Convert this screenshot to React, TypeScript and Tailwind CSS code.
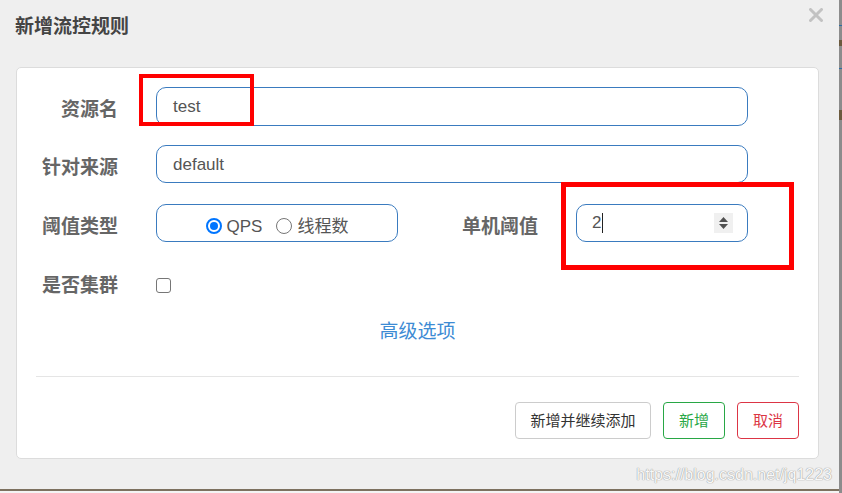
import React from "react";

const sans = "font-['Liberation_Sans','Noto_Sans_CJK_SC',sans-serif]";

function Label({ children, wide }: { children: React.ReactNode; wide?: boolean }) {
  return (
    <div
      className={`${wide ? "w-[102px]" : "w-[82px]"} shrink-0 pt-[7px] text-right text-[19px] font-bold leading-none text-[#666]`}
    >
      {children}
    </div>
  );
}

function Radio({ checked, label }: { checked?: boolean; label: string }) {
  return (
    <div className="flex items-center gap-[5px]">
      {checked ? (
        <span className="flex h-[16px] w-[16px] items-center justify-center rounded-full border-2 border-[#0075ff] bg-white">
          <span className="h-[8px] w-[8px] rounded-full bg-[#0075ff]" />
        </span>
      ) : (
        <span className="h-[16px] w-[16px] rounded-full border border-[#767676] bg-white" />
      )}
      <span className="text-[17px] leading-none text-[#555]">{label}</span>
    </div>
  );
}

export default function App() {
  return (
    <div className={`relative flex h-[493px] w-[842px] overflow-hidden bg-[#efefef] ${sans}`}>
      <div className="flex w-[839px] flex-col">
        <div className="flex h-[67px] items-start justify-between pl-[15px] pr-[16px]">
          <div className="mt-[15px] text-[19px] font-bold leading-[24px] text-[#444]">新增流控规则</div>
          <svg className="mt-[8px]" width="14" height="14" viewBox="0 0 14 14">
            <path d="M1.5 1.5 L12.5 12.5 M12.5 1.5 L1.5 12.5" stroke="#c2c2c2" strokeWidth="3" strokeLinecap="round" />
          </svg>
        </div>

        <div className="ml-[16px] w-[803px] rounded-[5px] border border-[#dcdcdc] bg-white px-[19px] pb-[19px] pt-[19px]">
          <div className="flex flex-col gap-[20px]">
            <div className="flex h-[38px] items-center gap-[38px]">
              <Label>资源名</Label>
              <div className="flex h-[39px] w-[592px] items-center rounded-[10px] border border-[#3a7bbf] px-[16px] pt-[1px] text-[17px] text-[#555]">
                test
              </div>
            </div>
            <div className="flex h-[38px] items-center gap-[38px]">
              <Label>针对来源</Label>
              <div className="flex h-[38px] w-[592px] items-center rounded-[10px] border border-[#3a7bbf] px-[16px] pt-[1px] text-[17px] text-[#555]">
                default
              </div>
            </div>
            <div className="mt-[1px] flex h-[38px] items-center gap-[38px]">
              <Label>阈值类型</Label>
              <div className="flex h-[38px] w-[242px] items-center justify-center gap-[14px] rounded-[10px] border border-[#3a7bbf] pt-[6px]">
                <Radio checked label="QPS" />
                <Radio label="线程数" />
              </div>
              <Label wide>单机阈值</Label>
              <div className="flex h-[38px] w-[172px] items-center rounded-[10px] border border-[#3a7bbf] pl-[15px] pr-[14px] text-[17px] text-[#555]">
                <span>2</span>
                <span className="ml-[1px] h-[20px] w-px bg-[#222]" />
                <div className="ml-auto flex h-[20px] w-[19px] flex-col items-center justify-center gap-[2px] bg-[#f0f0f0]">
                  <svg width="9" height="5" viewBox="0 0 9 5">
                    <path d="M0 5 L4.5 0 L9 5 Z" fill="#505050" />
                  </svg>
                  <svg width="9" height="5" viewBox="0 0 9 5">
                    <path d="M0 0 L4.5 5 L9 0 Z" fill="#505050" />
                  </svg>
                </div>
              </div>
            </div>
            <div className="mt-[1px] flex h-[38px] items-center gap-[38px]">
              <Label>是否集群</Label>
              <span className="mt-[6px] h-[15px] w-[15px] rounded-[3px] border border-[#767676] bg-white" />
            </div>
          </div>

          <div className="mt-[19px] text-center text-[19px] leading-[24px] text-[#3d8bd4]">高级选项</div>

          <div className="mt-[32px] border-t border-[#e5e5e5]" />

          <div className="mt-[25px] flex justify-end gap-[12px] text-[15px] leading-none">
            <div className="flex h-[37px] w-[136px] items-center justify-center rounded-[4px] border border-[#cccccc] text-[#333]">
              新增并继续添加
            </div>
            <div className="flex h-[37px] w-[62px] items-center justify-center rounded-[4px] border border-[#28a745] text-[#28a745]">
              新增
            </div>
            <div className="flex h-[37px] w-[62px] items-center justify-center rounded-[4px] border border-[#dc3545] text-[#dc3545]">
              取消
            </div>
          </div>
        </div>

        <div className="mt-[5px] flex justify-end pr-[7px]">
          <span className="text-[16px] leading-[22px] text-[#f8f8f8] [text-shadow:0_0_1px_#9a9a9a,0_0_1px_#9a9a9a]">
            https://blog.csdn.net/jq1223
          </span>
        </div>
        <div className="mt-auto h-[4px] border-t-2 border-[#7d715f] bg-[#f4f4f4]" />
      </div>

      <div className="relative w-[3px] bg-[#8c8c8c]">
        <div className="absolute left-0 top-[25px] h-px w-[3px] bg-[#2e6da4]" />
        <div className="absolute left-0 top-[68px] h-px w-[3px] bg-[#2e6da4]" />
        <div className="absolute left-0 top-[40px] h-[6px] w-[3px] bg-[#6b5a3e]" />
        <div className="absolute left-0 top-[110px] h-[10px] w-[3px] bg-[#6b5a3e]" />
      </div>

      <div className="absolute left-[139px] top-[74px] h-[52px] w-[115px] border-[4px] border-[#ff0000]" />
      <div className="absolute left-[561px] top-[182px] h-[88px] w-[233px] border-[5px] border-[#ff0000]" />
    </div>
  );
}
